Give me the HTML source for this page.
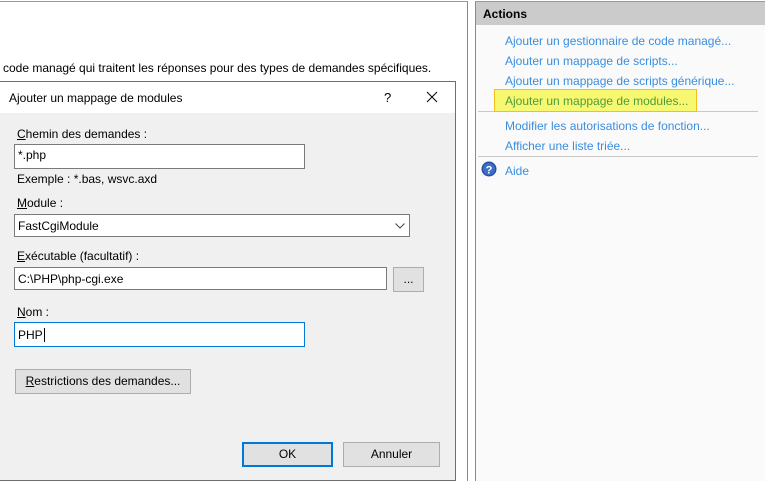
<!DOCTYPE html>
<html><head><meta charset="utf-8"><style>
*{margin:0;padding:0;box-sizing:border-box}
body{width:765px;height:481px;overflow:hidden;background:#fff;font-family:"Liberation Sans",sans-serif;font-size:12px;color:#000;position:relative}
.a{position:absolute;white-space:nowrap}
.inp{position:absolute;background:#fff;border:1px solid #7a7a7a;padding:3px 0 0 3px;font-size:12px}
.btn{position:absolute;background:#e1e1e1;border:1px solid #adadad;text-align:center;font-size:12px}
.lk{position:absolute;left:505px;color:#3a8ede;white-space:nowrap;font-size:12px}
u{text-decoration:underline}
</style></head><body>
<div class="a" style="left:-1px;top:1px;width:469px;height:480px;border-top:1px solid #9a9a9a;border-right:1px solid #8a8a8a"></div>
<div class="a" style="left:3px;top:61px">code managé qui traitent les réponses pour des types de demandes spécifiques.</div>
<!-- dialog -->
<div class="a" style="left:-1px;top:81px;width:457px;height:400px;border:1px solid #6e6e6e;background:#f0f0f0">
  <div style="height:31px;background:#fff;position:relative">
    <div class="a" style="left:9px;top:9px">Ajouter un mappage de modules</div>
    <div class="a" style="left:384px;top:8px;font-size:13px">?</div>
    <svg class="a" style="left:426px;top:9px" width="12" height="12"><path d="M1 1L11 11M11 1L1 11" stroke="#000" stroke-width="1"/></svg>
  </div>
</div>
<div class="a" style="left:17px;top:127px"><u>C</u>hemin des demandes :</div>
<div class="inp" style="left:14px;top:144px;width:291px;height:25px">*.php</div>
<div class="a" style="left:17px;top:172px">Exemple : *.bas, wsvc.axd</div>
<div class="a" style="left:17px;top:196px"><u>M</u>odule :</div>
<div class="inp" style="left:14px;top:214px;width:396px;height:23px;padding-top:4px">FastCgiModule
<svg class="a" style="left:380px;top:8px" width="10" height="6"><path d="M0.5 0.5L5 5L9.5 0.5" stroke="#444" fill="none"/></svg></div>
<div class="a" style="left:17px;top:249px"><u>E</u>xécutable (facultatif) :</div>
<div class="inp" style="left:14px;top:267px;width:373px;height:23px;padding-top:4px">C:\PHP\php-cgi.exe</div>
<div class="btn" style="left:393px;top:267px;width:31px;height:25px;line-height:22px">...</div>
<div class="a" style="left:17px;top:305px"><u>N</u>om :</div>
<div class="inp" style="left:14px;top:322px;width:291px;height:25px;border-color:#0078d7;padding-top:5px">PHP<span style="border-left:1px solid #000;margin-left:1px"></span></div>
<div class="btn" style="left:15px;top:369px;width:176px;height:25px;line-height:23px"><u>R</u>estrictions des demandes...</div>
<div class="btn" style="left:242px;top:442px;width:91px;height:25px;line-height:21px;border:2px solid #0078d7">OK</div>
<div class="btn" style="left:343px;top:442px;width:97px;height:25px;line-height:23px">Annuler</div>
<!-- actions -->
<div class="a" style="left:475px;top:1px;width:291px;height:480px;border-left:1px solid #8a8a8a;border-top:1px solid #9a9a9a;background:#fafafa"></div>
<div class="a" style="left:476px;top:2px;width:289px;height:23px;background:#cbcbcb"></div>
<div class="a" style="left:483px;top:7px;font-weight:bold">Actions</div>
<div class="lk" style="top:34px">Ajouter un gestionnaire de code managé...</div>
<div class="lk" style="top:54px">Ajouter un mappage de scripts...</div>
<div class="lk" style="top:74px">Ajouter un mappage de scripts générique...</div>
<div class="a" style="left:494px;top:89px;width:203px;height:23px;background:#f8f870;border:1px solid #f0c020"></div>
<div class="lk" style="top:94px;color:#4b9c3c">Ajouter un mappage de modules...</div>
<div class="a" style="left:697px;top:111px;width:61px;height:1px;background:#c8c8c8"></div>
<div class="a" style="left:478px;top:111px;width:16px;height:1px;background:#c8c8c8"></div>
<div class="lk" style="top:119px">Modifier les autorisations de fonction...</div>
<div class="lk" style="top:139px">Afficher une liste triée...</div>
<div class="a" style="left:478px;top:156px;width:280px;height:1px;background:#c8c8c8"></div>
<svg class="a" style="left:481px;top:161px" width="16" height="16"><circle cx="8" cy="8" r="7.5" fill="#2a4fa0"/><circle cx="8" cy="8" r="6" fill="#3c6fc8"/><text x="8" y="12.5" font-size="11" font-weight="bold" fill="#fff" text-anchor="middle" font-family="Liberation Sans">?</text></svg>
<div class="lk" style="top:164px">Aide</div>
</body></html>
